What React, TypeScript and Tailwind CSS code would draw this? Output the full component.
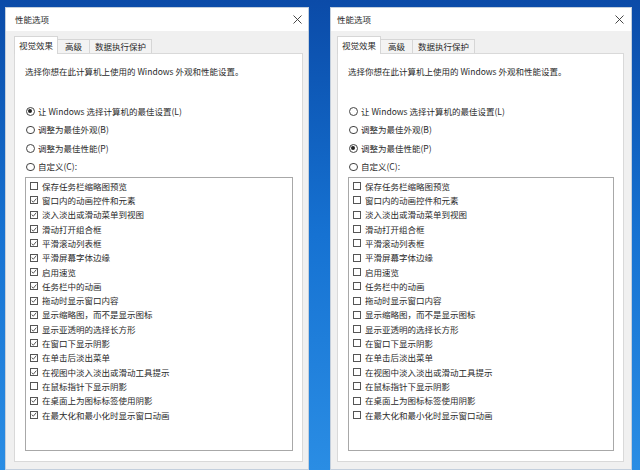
import React from 'react';

const radios = ['让 Windows 选择计算机的最佳设置(L)', '调整为最佳外观(B)', '调整为最佳性能(P)', '自定义(C):'];

const effects = [
  '保存任务栏缩略图预览',
  '窗口内的动画控件和元素',
  '淡入淡出或滑动菜单到视图',
  '滑动打开组合框',
  '平滑滚动列表框',
  '平滑屏幕字体边缘',
  '启用速览',
  '任务栏中的动画',
  '拖动时显示窗口内容',
  '显示缩略图，而不是显示图标',
  '显示亚透明的选择长方形',
  '在窗口下显示阴影',
  '在单击后淡出菜单',
  '在视图中淡入淡出或滑动工具提示',
  '在鼠标指针下显示阴影',
  '在桌面上为图标标签使用阴影',
  '在最大化和最小化时显示窗口动画',
];

const font = { fontFamily: '"Noto Sans CJK SC", "Noto Sans", sans-serif' };

const CloseIcon = () => (
  <svg width="9" height="9" viewBox="0 0 9 9" className="shrink-0">
    <path d="M0.5 0.5 L8.5 8.5 M8.5 0.5 L0.5 8.5" stroke="#333" strokeWidth="0.9" fill="none" />
  </svg>
);

const Radio = ({ on }: { on: boolean }) => (
  <span className="flex items-center justify-center w-[8.5px] h-[8.5px] rounded-full border border-[#444] bg-white shrink-0">
    {on && <span className="w-[4px] h-[4px] rounded-full bg-[#222]" />}
  </span>
);

const Check = ({ on }: { on: boolean }) => (
  <span className="flex items-center justify-center w-[8px] h-[8px] border border-[#555] bg-white shrink-0">
    {on && (
      <svg width="7" height="7" viewBox="0 0 7 7">
        <path d="M0.8 3.6 L2.7 5.5 L6.2 1.3" stroke="#222" strokeWidth="0.9" fill="none" />
      </svg>
    )}
  </span>
);

type DialogProps = {
  width: string;
  paneBox: string;
  titlePad: string;
  selected: number;
  checked: boolean[];
};

const Dialog = ({ width, paneBox, titlePad, selected, checked }: DialogProps) => (
  <div className={`${width} shrink-0 flex flex-col bg-[#f0f0f0] border border-[#c3cfdd] text-[8.5px] text-[#2a2a2a]`}>
    <div className={`h-[23px] bg-white flex items-center justify-between ${titlePad}`}>
      <span>性能选项</span>
      <CloseIcon />
    </div>

    <div className={paneBox}>
      {/* tabs */}
      <div className="flex items-end h-[22px]">
        <div className="relative z-10 -mb-px h-[18px] w-[44px] flex items-center justify-center bg-white border border-b-0 border-[#d6d6d6]">
          视觉效果
        </div>
        <div className="h-[14px] w-[32px] flex items-center justify-center border border-l-0 border-b-0 border-[#d6d6d6] bg-[#f3f3f3]">
          高级
        </div>
        <div className="h-[14px] w-[62px] flex items-center justify-center border border-l-0 border-b-0 border-[#d6d6d6] bg-[#f3f3f3]">
          数据执行保护
        </div>
      </div>

      {/* pane */}
      <div className="h-[409px] bg-white border border-[#d9d9d9] pt-[10px] pl-[10px] pr-[9px]">
        <div className="leading-[14px] whitespace-nowrap">选择你想在此计算机上使用的 Windows 外观和性能设置。</div>

        <div className="mt-[24px] flex flex-col">
          {radios.map((r, i) => (
            <div key={r} className="h-[18.5px] flex items-center gap-[3.5px] pl-px whitespace-nowrap">
              <Radio on={i === selected} />
              <span>{r}</span>
            </div>
          ))}
        </div>

        <div className="mt-px h-[274px] border border-[#a8a8a8] pt-px pl-[4px]">
          {effects.map((e, i) => (
            <div key={e} className="h-[14.3px] flex items-center gap-[4px] whitespace-nowrap">
              <Check on={checked[i]} />
              <span>{e}</span>
            </div>
          ))}
        </div>
      </div>
    </div>
  </div>
);

export default function App() {
  const leftChecked = effects.map((_, i) => i !== 0 && i !== 14);
  const rightChecked = effects.map(() => false);

  return (
    <div
      className="w-[640px] h-[470px] overflow-hidden flex gap-[21px] pt-[7px] pl-[5px] bg-gradient-to-b from-[#0b4ba8] via-[#1672d2] to-[#2a8de4]"
      style={font}
    >
      <Dialog
        width="w-[304px]"
        paneBox="pl-[8px] pr-[5px]"
        titlePad="pl-[9px] pr-[6px]"
        selected={0}
        checked={leftChecked}
      />
      <Dialog
        width="w-[302px]"
        paneBox="pl-[6px] pr-[7px]"
        titlePad="pl-[6px] pr-[7px]"
        selected={2}
        checked={rightChecked}
      />
    </div>
  );
}
